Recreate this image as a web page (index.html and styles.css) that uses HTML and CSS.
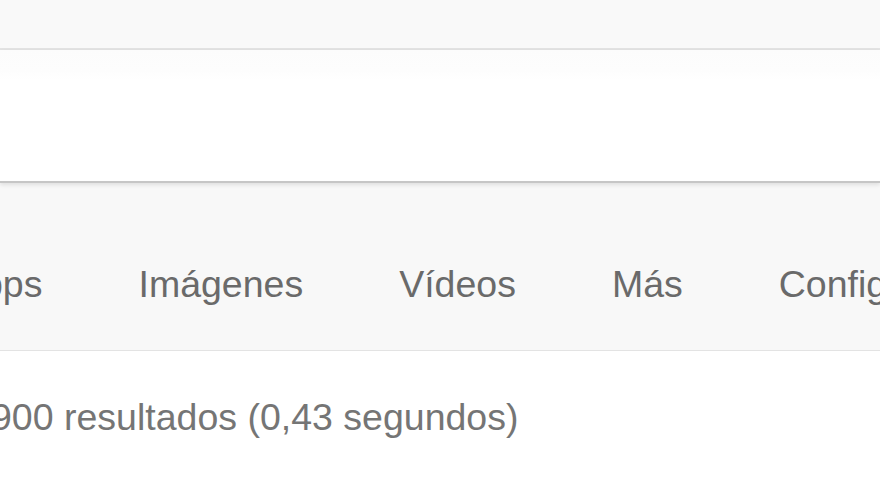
FILE: index.html
```html
<!DOCTYPE html>
<html lang="es">
<head>
    <meta charset="UTF-8">
    <meta name="viewport" content="width=device-width, initial-scale=1.0">
    <title>Resultados de búsqueda</title>
    <link rel="stylesheet" href="styles.css">
</head>
<body>
    <div class="top-bar"></div>

    <div class="search-bar"></div>

    <div class="tabs">
        <nav class="tab-list">
            <a class="tab" href="#">Apps</a>
            <a class="tab" href="#">Imágenes</a>
            <a class="tab" href="#">Vídeos</a>
            <a class="tab" href="#">Más</a>
            <a class="tab" href="#">Configuración</a>
        </nav>
    </div>

    <div class="results">
        <p class="result-stats">900 resultados (0,43 segundos)</p>
    </div>
</body>
</html>
```

FILE: styles.css
```css
:root {
    --bar-bg: #f9f9f9;
    --tabs-bg: #f8f8f8;
    --tab-text: #6a6a6a;
    --stats-text: #757575;
    --line-light: #e3e3e3;
    --line-dark: #c6c6c6;
}

html,
body {
    margin: 0;
    padding: 0;
}

body {
    font-family: "Liberation Sans", Arial, sans-serif;
    background-color: #ffffff;
    overflow: hidden;
}

.top-bar {
    height: 48px;
    background-color: var(--bar-bg);
    border-bottom: 2px solid var(--line-light);
}

.search-bar {
    height: 131px;
    background: linear-gradient(to bottom, #fcfcfc 0, #fdfdfd 20px, #ffffff 30px, #ffffff 100%);
    border-bottom: 2px solid var(--line-dark);
    box-shadow: 0 2px 4px rgba(0, 0, 0, 0.1);
    position: relative;
    z-index: 1;
}

.tabs {
    background-color: var(--tabs-bg);
    padding: 79px 0 44px 0;
    border-bottom: 1px solid var(--line-light);
    overflow: hidden;
}

.tab-list {
    display: flex;
    gap: 96px;
    margin-left: -43px;
    white-space: nowrap;
}

.tab {
    font-size: 37.5px;
    line-height: 44px;
    color: var(--tab-text);
    text-decoration: none;
}

.results {
    padding: 44px 0 0 0;
    overflow: hidden;
}

.result-stats {
    margin: 0 0 0 -9px;
    font-size: 37.5px;
    line-height: 44px;
    color: var(--stats-text);
    white-space: nowrap;
}
```
